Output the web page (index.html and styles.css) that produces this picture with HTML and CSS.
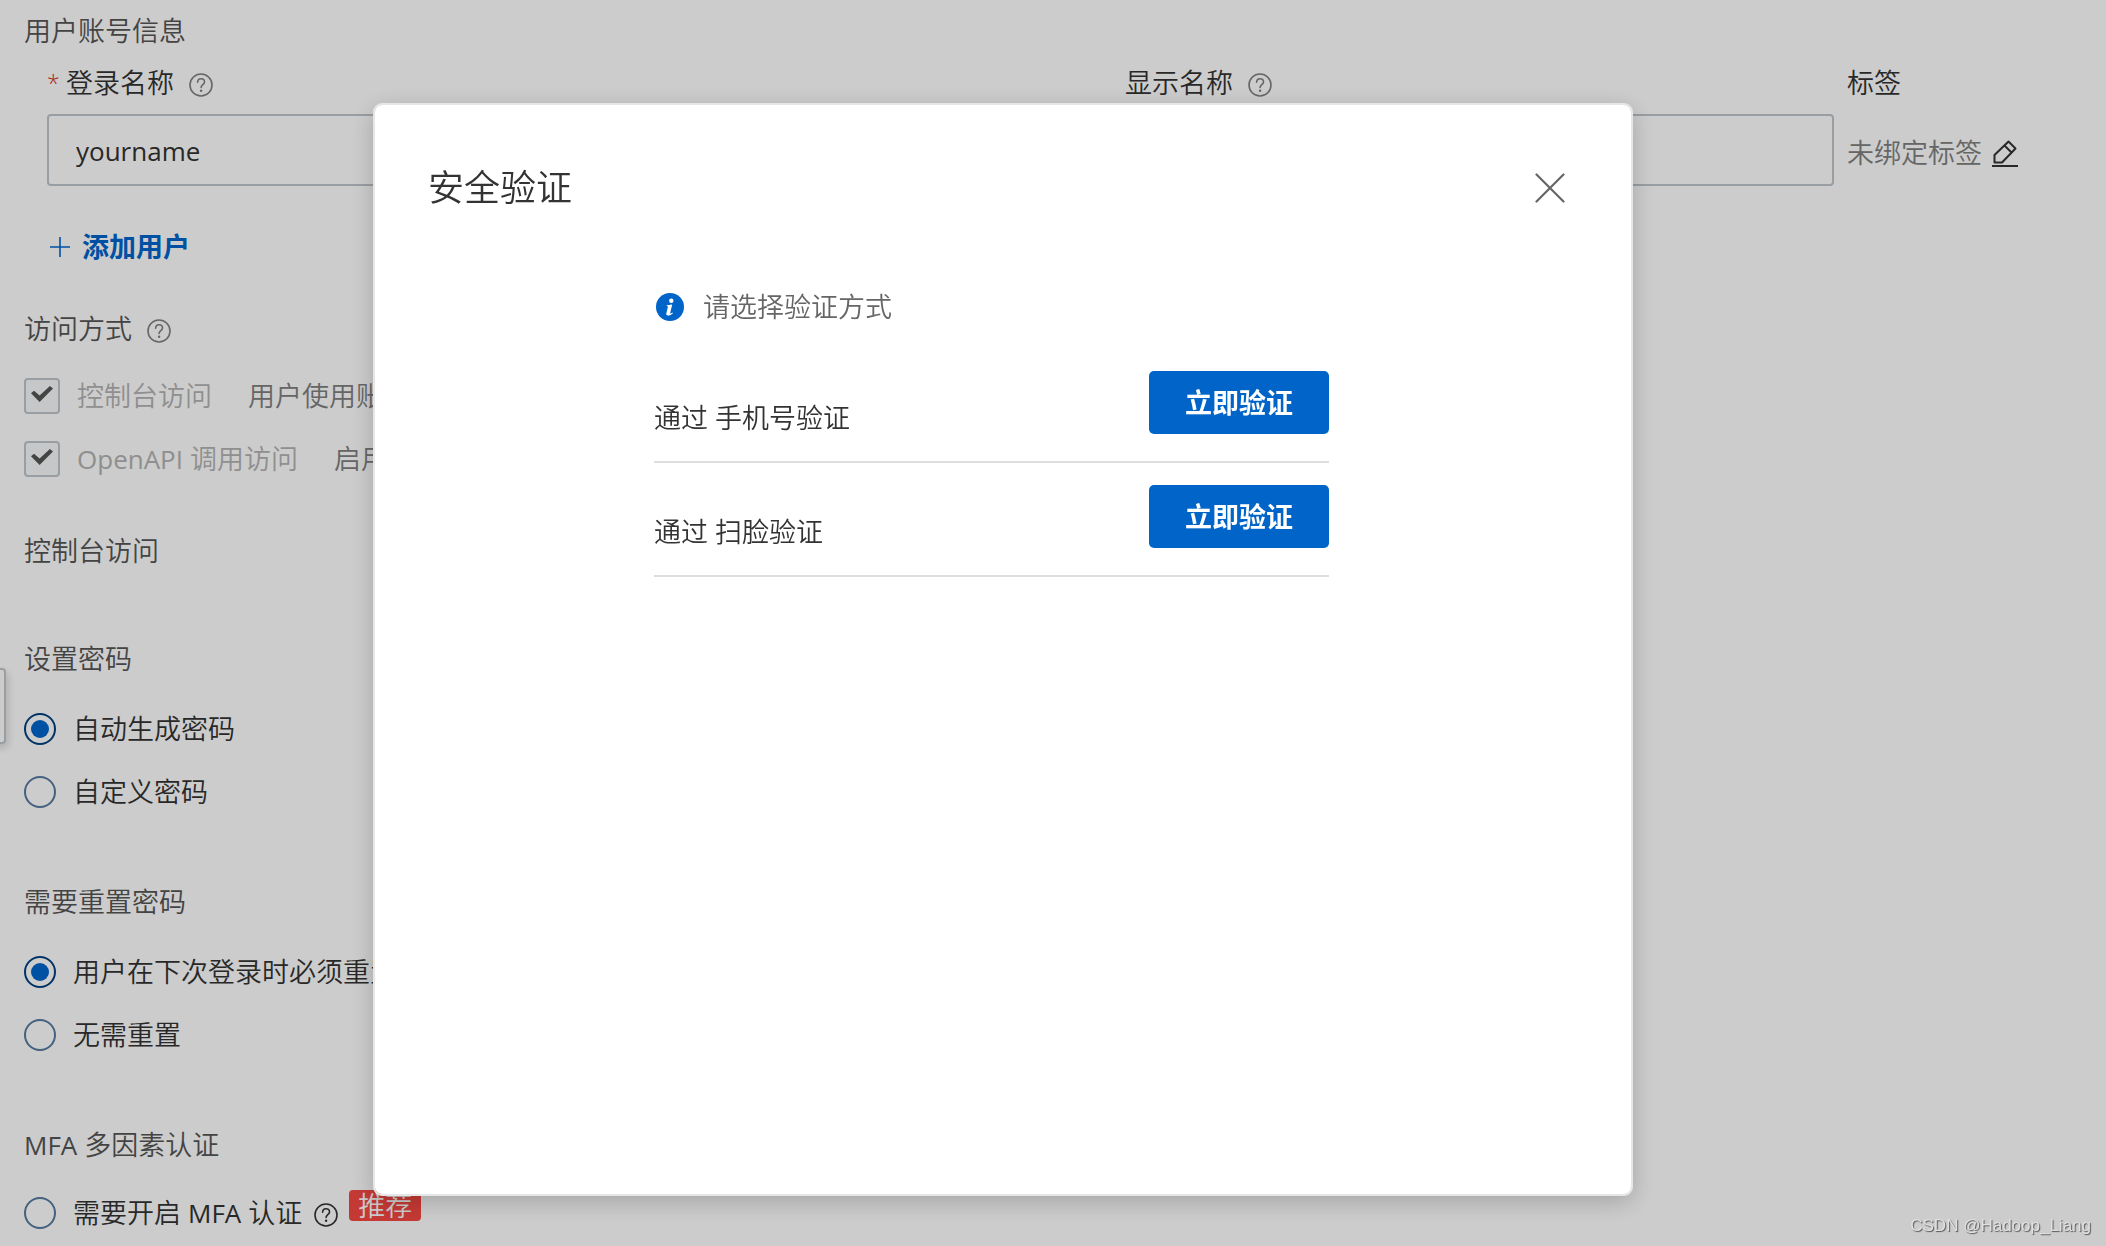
FILE: index.html
```html
<!DOCTYPE html>
<html lang="zh-CN">
<head>
<meta charset="utf-8">
<title>创建用户</title>
<link rel="stylesheet" href="styles.css">
</head>
<body>
<svg class="sprite" aria-hidden="true">
  <symbol id="help" viewBox="0 0 24 24">
    <circle cx="12" cy="12" r="11" fill="none" stroke="currentColor" stroke-width="1.6"/>
    <path d="M8.6 9.3C8.7 7 10 5.8 12 5.8s3.500 1.200 3.500 3.100c0 2.800-3.400 2.800-3.400 5.600" fill="none" stroke="currentColor" stroke-width="1.6" stroke-linecap="round"/>
    <circle cx="12.100" cy="17.800" r="1.200" fill="currentColor"/>
  </symbol>
</svg>

<main class="page">
  <h2 class="title">用户账号信息</h2>
  <div class="user-grid">
    <div class="field">
      <label class="field-label" for="login"><span class="required">*</span>登录名称<svg class="help"><use href="#help"/></svg></label>
      <input class="text-input" id="login" type="text" value="yourname">
    </div>
    <div class="field">
      <label class="field-label" for="display">显示名称<svg class="help"><use href="#help"/></svg></label>
      <input class="text-input" id="display" type="text">
    </div>
    <div class="field">
      <div class="field-label">标签</div>
      <div class="tag-value">未绑定标签
        <a class="edit" href="#" aria-label="编辑标签">
          <svg viewBox="0 0 28 28"><path d="M3.500 23.500v-7.500L17.500 2.500l7 7L11 23.500zM13.500 6.500l7 7" fill="none" stroke="currentColor" stroke-width="2" stroke-linejoin="round"/><path d="M1 27h26" stroke="currentColor" stroke-width="2"/></svg>
        </a>
      </div>
    </div>
  </div>
  <button class="add" type="button"><svg viewBox="0 0 20 20"><path d="M10 0v20M0 10h20" stroke="currentColor" stroke-width="1.6"/></svg>添加用户</button>

  <h2 class="title access-title">访问方式<svg class="help"><use href="#help"/></svg></h2>
  <div class="options">
    <div class="option"><input class="check" id="console" type="checkbox" checked disabled><label class="disabled" for="console">控制台访问</label><span class="hint">用户使用账号密码访问控制台</span></div>
    <div class="option"><input class="check" id="api" type="checkbox" checked disabled><label class="disabled" for="api"><span class="latin">OpenAPI</span> 调用访问</label><span class="hint">启用 AccessKey，支持通过 API 访问</span></div>
  </div>

  <h2 class="title console-title">控制台访问</h2>

  <div class="groups">
    <section>
      <h3 class="title">设置密码</h3>
      <div class="options">
        <div class="option"><input class="radio" id="auto" name="pwd" type="radio" checked><label for="auto">自动生成密码</label></div>
        <div class="option"><input class="radio" id="custom" name="pwd" type="radio"><label for="custom">自定义密码</label></div>
      </div>
    </section>
    <section>
      <h3 class="title">需要重置密码</h3>
      <div class="options">
        <div class="option"><input class="radio" id="must" name="reset" type="radio" checked><label for="must">用户在下次登录时必须重置密码</label></div>
        <div class="option"><input class="radio" id="none" name="reset" type="radio"><label for="none">无需重置</label></div>
      </div>
    </section>
    <section>
      <h3 class="title"><span><span class="latin">MFA</span> 多因素认证</span></h3>
      <div class="options mfa-options">
        <div class="option"><input class="radio" id="mfa" name="mfa" type="radio"><label for="mfa">需要开启 <span class="latin">MFA</span> 认证</label><svg class="help mfa-help"><use href="#help"/></svg><span class="badge">推荐</span></div>
      </div>
    </section>
  </div>
</main>
<div class="drawer-handle"></div>

<div class="overlay">
  <div class="dialog" role="dialog" aria-labelledby="dialog-title">
    <header class="dialog-header">
      <h1 class="dialog-title" id="dialog-title">安全验证</h1>
      <button class="close" type="button" aria-label="关闭"><svg viewBox="0 0 30 30"><path d="M1.500 1.500l27 27M28.500 1.500l-27 27" stroke="currentColor" stroke-width="2.200" stroke-linecap="round"/></svg></button>
    </header>
    <div class="dialog-body">
      <p class="notice">
        <svg viewBox="0 0 28 28"><circle cx="14" cy="14" r="14" fill="#0064c8"/><circle cx="15.300" cy="7.800" r="2.200" fill="#fff"/><path d="M10.800 12.300l5.400-.7-2 8.300c-.2 1 .6.900 2.200-.3l.5.700c-3.300 3.200-7.300 2.800-6.600.3l1.500-6.300c.2-.9-.1-1.200-1.300-1.200z" fill="#fff"/></svg>
        请选择验证方式
      </p>
      <div class="method"><span class="method-name">通过 手机号验证</span><button class="verify" type="button">立即验证</button></div>
      <div class="method"><span class="method-name">通过 扫脸验证</span><button class="verify" type="button">立即验证</button></div>
    </div>
  </div>
</div>
<div class="watermark">CSDN @Hadoop_Liang</div>
</body>
</html>
```
FILE: styles.css
```css
* { box-sizing: border-box; }

body {
  margin: 0;
  min-height: 100vh;
  overflow: hidden;
  background: #fff;
  color: #333;
  font: 350 27px/36px "Open Sans", "Noto Sans CJK SC", sans-serif;
}

input, button { font: inherit; color: inherit; }
button { padding: 0; border: 0; background: none; cursor: pointer; }
h1, h2, h3, p { margin: 0; font-size: inherit; font-weight: inherit; }
svg { display: block; flex: none; }
.sprite { display: none; }

.page { padding: 13px 0 13px 24px; white-space: nowrap; }
.title { display: flex; align-items: center; color: #555; }
.latin { font-size: 26px; font-weight: 400; }
.help { width: 24px; height: 24px; margin: 4px 0 0 15px; color: #808080; }

.user-grid {
  display: grid;
  grid-template-columns: 1065fr 709fr 259fr;
  gap: 13px;
  margin-top: 16px;
  padding-left: 23px;
}
.field { display: flex; flex-direction: column; gap: 13px; min-width: 0; }
.field-label { display: flex; align-items: center; height: 36px; }
.required { width: 19px; color: #d93026; font-size: 23px; }
.text-input {
  width: 100%;
  height: 72px;
  padding: 2px 27px 0;
  border: 2px solid #c0c6cc;
  border-radius: 4px;
  background: #fff;
  font-size: 26px;
  font-weight: 400;
}
.tag-value { display: flex; align-items: center; gap: 9px; height: 72px; padding-top: 5px; color: #808080; }
.edit { color: #333; }
.edit svg { width: 28px; height: 28px; }

.add {
  display: flex;
  align-items: center;
  gap: 12px;
  margin: 43px 0 0 26px;
  color: #06c;
  font-weight: 700;
}
.add svg { width: 20px; height: 20px; }

.access-title { margin: 46px 0 31px; }
.options { display: flex; flex-direction: column; gap: 27px; }
.option { display: flex; align-items: center; height: 36px; }
.disabled { color: #b3b3b3; }
.hint { margin-left: 36px; color: #808080; }

.check, .radio {
  appearance: none;
  display: grid;
  place-items: center;
  flex: none;
  margin: 0;
}
.check {
  width: 36px;
  height: 36px;
  margin-right: 17px;
  border: 2px solid #c0c6cc;
  border-radius: 4px;
  background: #f7f9fa;
}
.check:checked::before {
  content: "";
  width: 22px;
  height: 16px;
  margin-bottom: 4px;
  background: #555;
  clip-path: polygon(0 45%, 14% 30%, 39% 60%, 86% 0, 100% 16%, 39% 100%);
}
.radio {
  width: 32px;
  height: 32px;
  margin-right: 17px;
  border: 2px solid #557a9f;
  border-radius: 50%;
}
.radio:checked { border-color: #004080; }
.radio:checked::before {
  content: "";
  width: 18px;
  height: 18px;
  border-radius: 50%;
  background: #06c;
}

.console-title { margin-top: 56px; }
.groups { display: flex; flex-direction: column; gap: 74px; margin-top: 72px; }
.groups .options { margin-top: 34px; }
.groups .mfa-options { margin-top: 32px; }
.mfa-help { margin: 4px 11px 0 12px; color: #333; }
.badge {
  align-self: flex-start;
  height: 31px;
  margin-top: -5px;
  padding: 0 9px;
  border-radius: 4px;
  background: #f74842;
  color: #fff;
  line-height: 31px;
}

.drawer-handle {
  position: fixed;
  left: -20px;
  top: 668px;
  width: 26px;
  height: 76px;
  border: 2px solid #c0c6cc;
  border-radius: 4px;
  background: #fff;
  box-shadow: 2px 4px 8px rgba(0, 0, 0, .16);
}

.overlay {
  position: fixed;
  inset: 0;
  display: flex;
  justify-content: center;
  padding: 103px 100px 50px 0;
  background: rgba(0, 0, 0, .2);
}
.dialog {
  width: 1260px;
  max-width: 100%;
  border: 2px solid #e6e6e6;
  border-radius: 9px;
  background: #fff;
  background-clip: padding-box;
  box-shadow: 0 6px 24px rgba(0, 0, 0, .2);
}
.dialog-header {
  display: flex;
  align-items: center;
  justify-content: space-between;
  padding: 57px 66px 0 53px;
}
.dialog-title { font-size: 36px; line-height: 52px; }
.close { color: #666; }
.close svg { width: 30px; height: 30px; }
.dialog-body { width: 675px; margin: 75px auto 0 279px; }
.notice {
  display: flex;
  align-items: center;
  gap: 19px;
  padding-left: 2px;
  margin-bottom: 46px;
  color: #666;
}
.notice svg { width: 28px; height: 28px; }
.method {
  display: flex;
  align-items: flex-start;
  justify-content: space-between;
  height: 92px;
  margin-bottom: 22px;
  border-bottom: 2px solid #dedede;
}
.method-name { padding-top: 29px; }
.verify {
  width: 180px;
  height: 63px;
  border-radius: 5px;
  background: #0064c8;
  color: #fff;
  font-weight: 700;
}

.watermark {
  position: fixed;
  right: 15px;
  bottom: 8px;
  color: #e0e0e0;
  font: 17px/24px "Liberation Sans", Arial, sans-serif;
  text-shadow: 1px 1px 1px #555;
}
```
